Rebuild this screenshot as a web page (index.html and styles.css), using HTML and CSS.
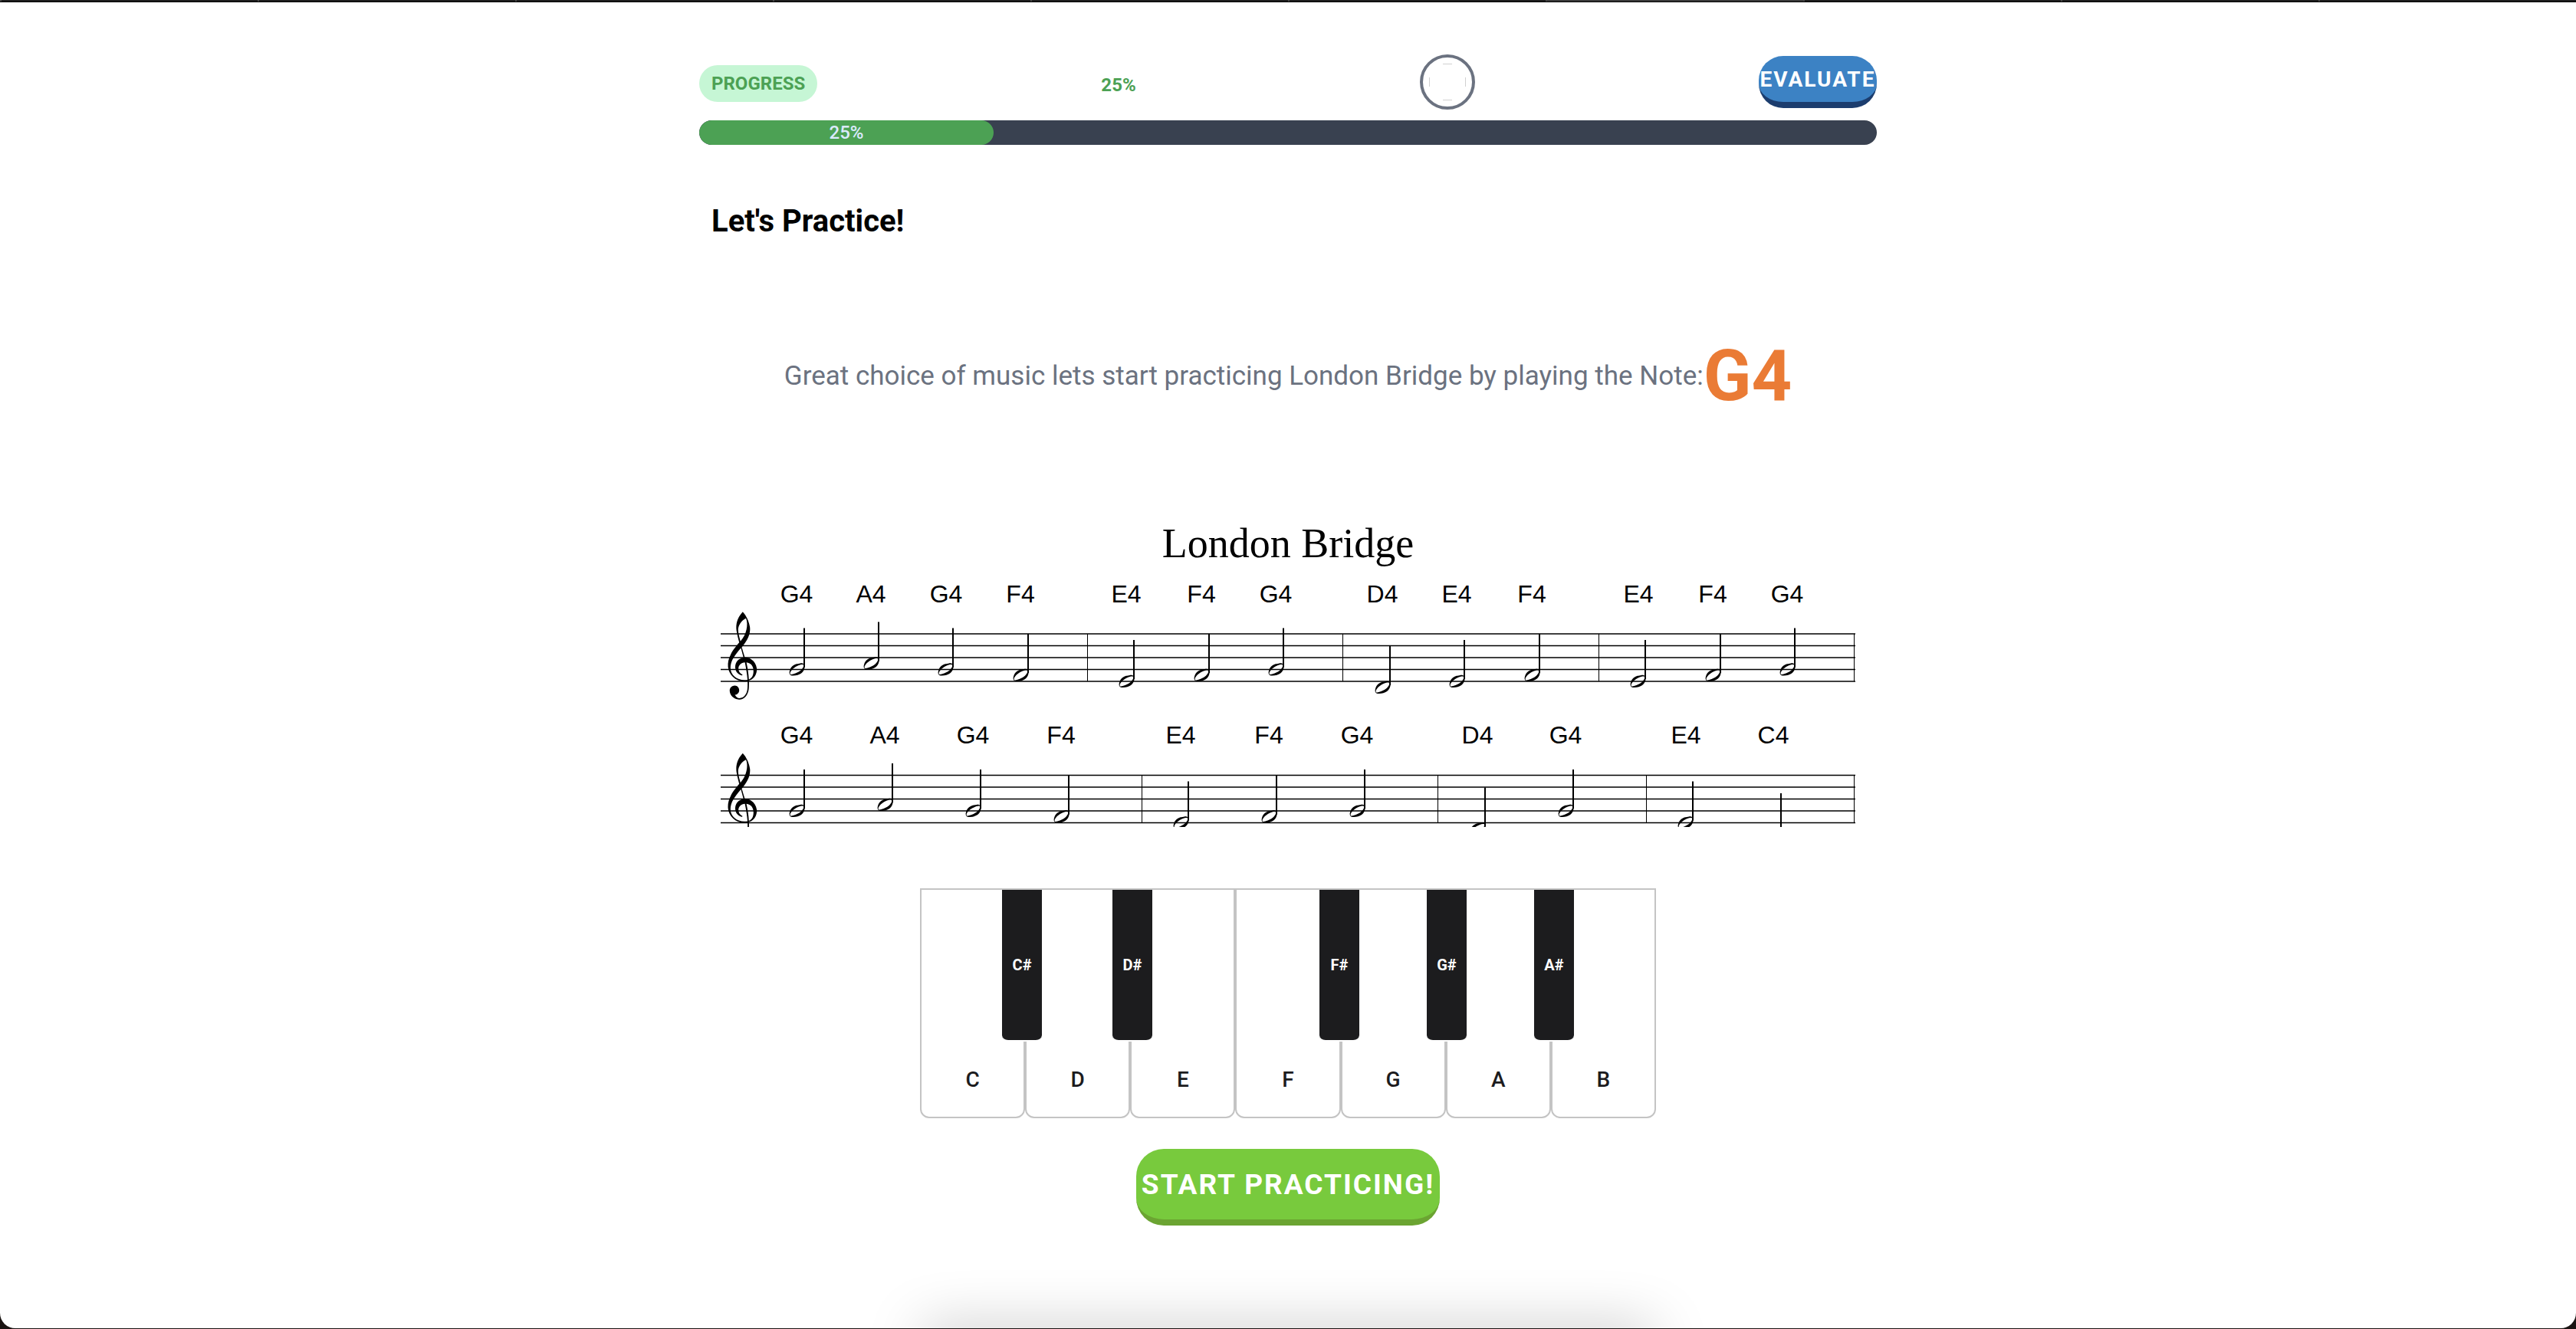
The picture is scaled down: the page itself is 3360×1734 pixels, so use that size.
FILE: index.html
```html
<!DOCTYPE html>
<html lang="en">
<head>
<meta charset="utf-8">
<title>London Bridge practice</title>
<link rel="stylesheet" href="styles.css">
</head>
<body>
<div class="tabstrip"><i></i><i></i><i></i><i></i><i></i><i></i><i class="current"></i><i></i><i></i><i></i></div>
<div class="page">
  <main class="lesson">
    <header class="status">
      <span class="pill">PROGRESS</span>
      <span class="percent">25%</span>
      <svg class="ring" viewBox="0 0 72 72" aria-hidden="true">
        <circle cx="36" cy="36" r="34" fill="none" stroke="#6b7280" stroke-width="4"/>
        <path d="M30 12.500h12M30 59.500h12M12.500 30v12M59.500 30v12" stroke="#d0d0d0" stroke-width="1"/>
      </svg>
      <button class="btn btn-evaluate" type="button">EVALUATE</button>
    </header>
    <div class="bar"><div class="bar-fill" style="width:25%">25%</div></div>
    <h1 class="title">Let's Practice!</h1>
    <p class="prompt">Great choice of music lets start practicing London Bridge by playing the Note:<strong class="note">G4</strong></p>

    <section class="score">
      <h2 class="score-title">London Bridge</h2>
      <svg class="sheet" viewBox="0 -10 1480 329">
        <defs>
          <path id="clef" fill-rule="evenodd" transform="scale(2)" d="M9.69-37.41c.09-.09.24-.06.36 0 .12.09.57.6.96 1.11 1.77 2.34 3.21 5.85 3.57 8.73.21 1.56.03 3.27-.45 4.86-.69 2.31-1.92 4.47-4.23 7.44-.3.39-.57.72-.6.75-.03.06 0 .15.18.78.54 1.68 1.38 4.44 1.68 5.49l.09.42h.39c1.47.09 2.76.51 3.96 1.29 1.83 1.23 3.06 3.21 3.39 5.52.09.45.12 1.29.06 1.74-.09 1.02-.33 1.83-.75 2.73-.84 1.71-2.28 3.06-4.02 3.72l-.33.12.03 1.26c0 1.74-.06 3.63-.21 4.62-.45 3.06-2.19 5.49-4.47 6.21-.57.18-.9.21-1.59.21s-1.02-.03-1.65-.21c-1.14-.27-2.13-.84-2.94-1.65-.99-.99-1.56-2.16-1.71-3.54-.09-.81.06-1.53.45-2.13.63-.99 1.83-1.56 3-1.53 1.5.09 2.64 1.32 2.73 2.94.06 1.47-.93 2.7-2.37 2.97l-.45.06C5.6 18.1 6.7 18.7 7.8 18.7C10.6 18.6 12.5 16.2 12.9 13C13.1 11.4 13.1 9.4 13.05 7.5C12.3 7.7 11.6 7.8 10.9 7.8C5 7.7.8 3.3.3-1.8C.1-4.5.6-7 2.1-9.9C3.3-12.3 4.9-14.4 7.6-17.6C7-19.8 6.3-22.6 5.8-25.5C5.3-29.5 6.2-33.6 9.69-37.41ZM12-33.4C8.9-32 7-28.6 6.9-26.1C6.9-23.5 7.7-21 8.4-18.4C10.5-21 11.6-23 12.3-26C12.9-28.5 12.9-31.5 12-33.4ZM8.7-14C4.5-9 1.9-5.6 1.9-1C1.9 3.6 6 6.9 11 6.9C11.7 6.9 12.3 6.8 13 6.7C12.7 3 12.1-.8 11.3-4.6C8.9-4.5 7.1-2.7 7.1-.6C7.1 1.2 8 2.5 9.7 3.4C9.8 3.8 9.5 3.9 9.2 3.9C6.3 3.1 5 .8 5-1.6C5-4.8 7.2-7.2 10.4-7.7ZM12.3-4.6C15.3-4.3 16.9-2 16.9 1C16.9 3.8 15.9 5.6 13.9 6.5C13.7 2.6 13.1-1 12.3-4.6Z"/>
          <g id="half">
            <path fill-rule="evenodd" transform="translate(-20 0) scale(2)" d="M7.44-4.05c.06-.03.27-.03.48-.03 1.05 0 1.71.24 2.1.81.42.6.45 1.35.18 2.4-.42 1.59-1.14 2.73-2.16 3.39-1.41.93-3.18 1.44-5.13 1.53-1.17.03-1.83-.21-2.25-.81-.42-.6-.45-1.35-.18-2.4.42-1.59 1.14-2.73 2.16-3.39.63-.42 1.44-.78 2.28-1.02.6-.15 1.68-.33 2.52-.48ZM9.4-3.1C8.4-3.6 5.2-2.4 3.2-.9C1.3.5.4 2.4 1 3.1C1.7 3.7 5.2 2.4 7.3.9C9.2-.5 10-2.4 9.4-3.1Z"/>
            <path d="M-1-54h2V-3h-2Z"/>
          </g>
          <path id="staff" d="M0 67h1480M0 82.500h1480M0 98h1480M0 113.500h1480M0 129h1480" stroke="#000" stroke-width="1.400"/>
        </defs>
        <g>
          <use href="#staff"/>
          <use href="#clef" x="9" y="113.500"/>
          <path class="barline" d="M478.500 67v62M811.500 67v62M1145.500 67v62M1478.500 67v62"/>
          <use href="#half" x="109" y="113.500"/><use href="#half" x="206" y="105.500"/><use href="#half" x="303" y="113.500"/><use href="#half" x="401" y="121"/>
          <use href="#half" x="539" y="129"/><use href="#half" x="637" y="121"/><use href="#half" x="734" y="113.500"/>
          <use href="#half" x="873" y="137"/><use href="#half" x="970" y="129"/><use href="#half" x="1068" y="121"/>
          <use href="#half" x="1206" y="129"/><use href="#half" x="1304" y="121"/><use href="#half" x="1401" y="113.500"/>
          <g class="names">
            <text x="99" y="26">G4</text><text x="196" y="26">A4</text><text x="294" y="26">G4</text><text x="391" y="26">F4</text>
            <text x="529" y="26">E4</text><text x="627" y="26">F4</text><text x="724" y="26">G4</text>
            <text x="863" y="26">D4</text><text x="960" y="26">E4</text><text x="1058" y="26">F4</text>
            <text x="1197" y="26">E4</text><text x="1294" y="26">F4</text><text x="1391" y="26">G4</text>
          </g>
        </g>
        <g transform="translate(0 184.500)">
          <use href="#staff"/>
          <use href="#clef" x="9" y="113.500"/>
          <path class="barline" d="M549.500 67v62M935.500 67v62M1207.500 67v62M1478.500 67v62"/>
          <use href="#half" x="109" y="113.500"/><use href="#half" x="224" y="105.500"/><use href="#half" x="339" y="113.500"/><use href="#half" x="454" y="121"/>
          <use href="#half" x="610" y="129"/><use href="#half" x="725" y="121"/><use href="#half" x="840" y="113.500"/>
          <use href="#half" x="997" y="137"/><use href="#half" x="1112" y="113.500"/>
          <use href="#half" x="1268" y="129"/><use href="#half" x="1383" y="144.500"/>
          <g class="names">
            <text x="99" y="25">G4</text><text x="214" y="25">A4</text><text x="329" y="25">G4</text><text x="444" y="25">F4</text>
            <text x="600" y="25">E4</text><text x="715" y="25">F4</text><text x="830" y="25">G4</text>
            <text x="987" y="25">D4</text><text x="1102" y="25">G4</text>
            <text x="1259" y="25">E4</text><text x="1373" y="25">C4</text>
          </g>
        </g>
      </svg>
    </section>

    <div class="piano">
      <button class="key" type="button">C</button>
      <button class="key" type="button">D</button>
      <button class="key" type="button">E</button>
      <button class="key" type="button">F</button>
      <button class="key" type="button">G</button>
      <button class="key" type="button">A</button>
      <button class="key" type="button">B</button>
      <button class="sharp" type="button" style="left:11.15%">C#</button>
      <button class="sharp" type="button" style="left:26.15%">D#</button>
      <button class="sharp" type="button" style="left:54.27%">F#</button>
      <button class="sharp" type="button" style="left:68.85%">G#</button>
      <button class="sharp" type="button" style="left:83.44%">A#</button>
    </div>
    <button class="btn btn-start" type="button">START PRACTICING!</button>
  </main>
  <div class="dock-shadow"></div>
</div>
</body>
</html>
```
FILE: styles.css
```css
* { box-sizing: border-box; }

body {
  margin: 0;
  min-height: 100vh;
  display: flex;
  flex-direction: column;
  background: #1a1412;
  font-family: Roboto, "Liberation Sans", sans-serif;
  color: #000;
}

button { font-family: inherit; padding: 0; cursor: pointer; }

.tabstrip {
  display: grid;
  grid-template-columns: repeat(10, 1fr);
  height: 3px;
  background: #1e1e1e;
  border-bottom: 1px solid #000;
}
.tabstrip i { border-left: 2px solid #444; }
.tabstrip .current { background: #3a3a3a; }

.page {
  position: relative;
  flex: 1;
  margin-bottom: 1px;
  padding: 68px 24px 0;
  background: #fff;
  border-radius: 0 0 20px 20px;
  overflow: hidden;
}

.lesson {
  max-width: 1536px;
  margin: 0 auto;
  display: flex;
  flex-direction: column;
}

.status {
  display: flex;
  justify-content: space-between;
  align-items: center;
  height: 72px;
}
.pill {
  margin-top: 4px;
  padding: 0 16px;
  border-radius: 24px;
  background: #c6f6d5;
  color: #4ca154;
  font-size: 24px;
  font-weight: 700;
  line-height: 48px;
}
.percent {
  margin-top: 8px;
  color: #4ca154;
  font-size: 24px;
  font-weight: 700;
  line-height: 32px;
}
.ring { width: 72px; height: 72px; }

.btn {
  border: 0;
  border-bottom: 8px solid;
  color: #fff;
  font-weight: 700;
  letter-spacing: 2px;
  white-space: nowrap;
  overflow: hidden;
}
.btn-evaluate {
  width: 154px;
  height: 68px;
  border-radius: 32px;
  border-color: #1c3d6e;
  background: #3c82c4;
  font-size: 28px;
}

.bar {
  height: 32px;
  margin-top: 14px;
  border-radius: 16px;
  background: #394150;
  overflow: hidden;
}
.bar-fill {
  height: 100%;
  border-radius: 16px;
  background: #4ca154;
  color: #dbeafe;
  font-size: 24px;
  font-weight: 500;
  line-height: 32px;
  text-align: center;
}

.title {
  margin: 72px 0 0;
  padding: 0 16px;
  font-size: 40px;
  font-weight: 700;
  line-height: 56px;
}
.prompt {
  display: flex;
  justify-content: center;
  align-items: center;
  margin: 126px 0 0;
  color: #6b7280;
  font-size: 35px;
  font-weight: 400;
  line-height: 96px;
}
.note { color: #ea7b35; font-size: 92px; }

.score { margin-top: 140px; padding: 0 28px; }
.score-title {
  margin: 0;
  font-family: "Liberation Serif", serif;
  font-size: 54px;
  font-weight: 400;
  line-height: 60px;
  text-align: center;
}
.sheet { display: block; width: 100%; margin-top: 11px; }
.barline { stroke: #000; stroke-width: 1; }
.names {
  font-family: "Liberation Sans", sans-serif;
  font-size: 32px;
  text-anchor: middle;
}

.piano {
  position: relative;
  display: grid;
  grid-template-columns: repeat(7, 1fr);
  width: 100%;
  max-width: 960px;
  height: 300px;
  margin: 80px auto 0;
}
.key {
  display: flex;
  justify-content: center;
  align-items: flex-end;
  padding-bottom: 32px;
  border: 2px solid #c4c4c4;
  border-radius: 0 0 12px 12px;
  background: #fff;
  color: #1c1c1e;
  font-size: 28px;
  font-weight: 500;
  line-height: 32px;
}
.sharp {
  position: absolute;
  top: 2px;
  width: 52px;
  height: 198px;
  border: 0;
  border-bottom: 2px solid #fff;
  border-radius: 0 0 8px 8px;
  background: #1c1c1e;
  color: #fff;
  font-size: 20px;
  font-weight: 700;
}

.btn-start {
  align-self: center;
  width: 396px;
  height: 100px;
  margin-top: 40px;
  border-radius: 36px;
  border-color: #6ba432;
  background: #78ca3d;
  font-size: 37px;
}

.dock-shadow {
  position: absolute;
  left: 50%;
  bottom: -40px;
  width: 960px;
  height: 40px;
  transform: translateX(-50%);
  border-radius: 20px;
  box-shadow: 0 0 72px rgba(0, 0, 0, .25);
}
```
